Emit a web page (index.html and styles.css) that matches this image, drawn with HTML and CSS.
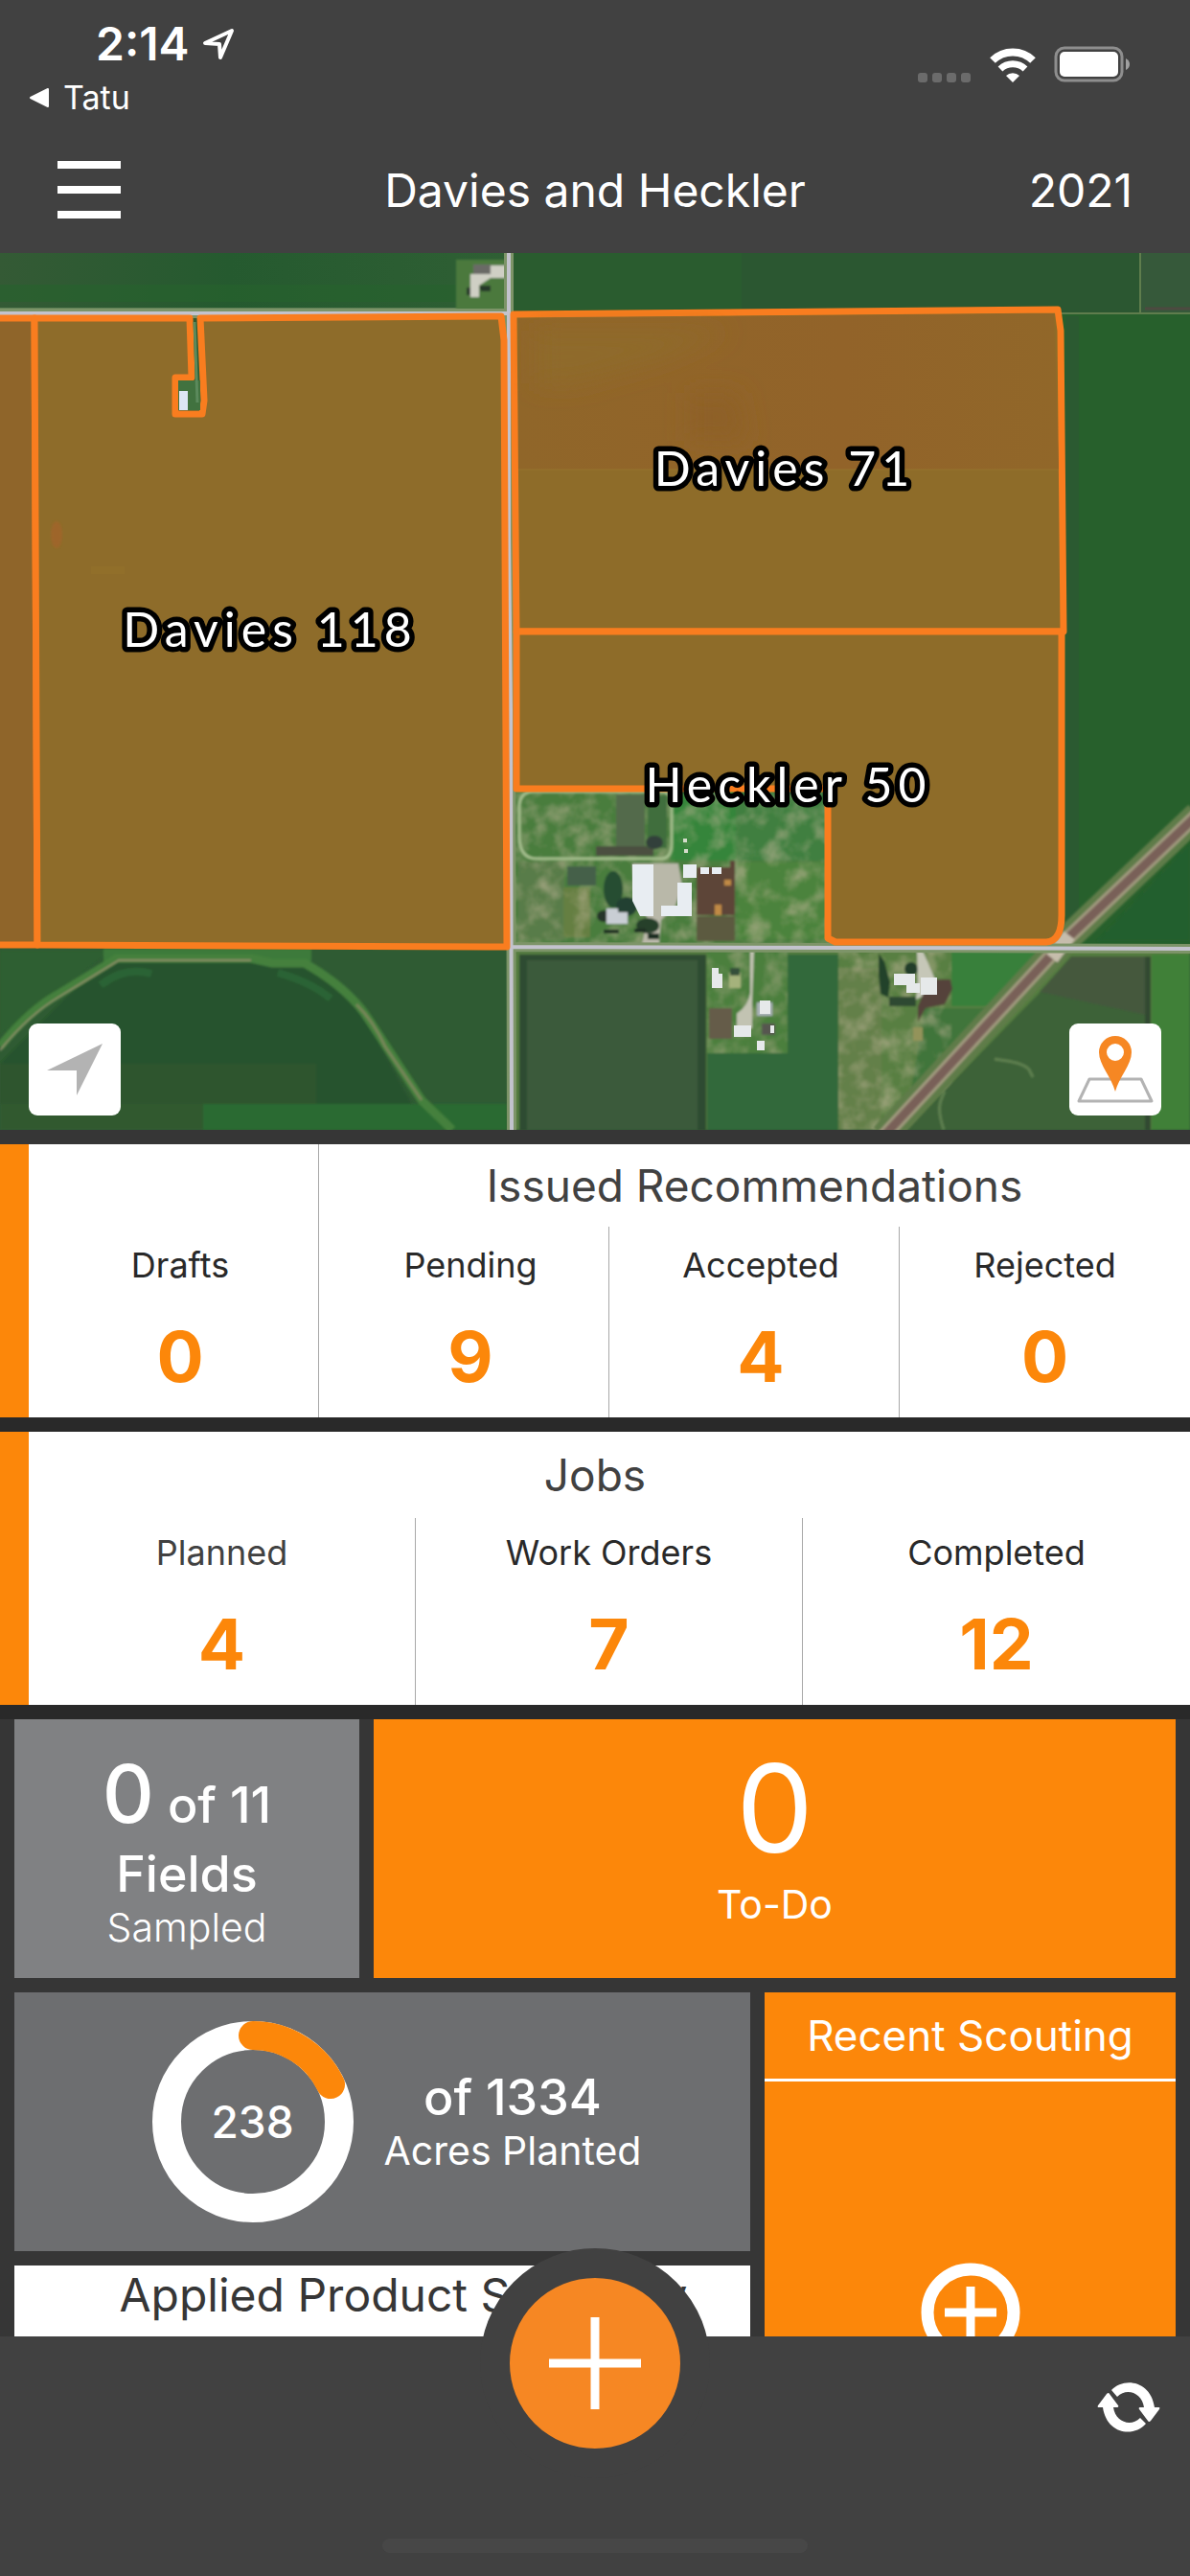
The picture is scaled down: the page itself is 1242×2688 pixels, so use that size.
FILE: index.html
```
<!DOCTYPE html>
<html lang="en">
<head>
    <meta charset="UTF-8">
    <meta name="viewport" content="width=device-width, initial-scale=1.0">
    <title>Davies and Heckler</title>
    <link rel="stylesheet" href="styles.css">
</head>
<body>
<div class="app">
    <header class="header">
        <div class="status-bar">
            <div class="status-left">
                <div class="time">2:14
                    <svg class="location-icon" viewBox="0 0 34 34" width="34" height="34">
                        <path d="M3 16 L31 3 L19 31 L18 17 Z" fill="none" stroke="#fff" stroke-width="4" stroke-linejoin="round"/>
                    </svg>
                </div>
                <a href="#" class="back-link">
                    <svg viewBox="0 0 22 22" width="22" height="22">
                        <path d="M2 11 L20 2 V20 Z" fill="#fff" stroke="#fff" stroke-width="2" stroke-linejoin="round"/>
                    </svg>
                    Tatu
                </a>
            </div>
            <div class="status-right">
                <svg viewBox="0 0 56 10" width="56" height="10" fill="#6b6b6b">
                    <rect x="0" width="10" height="10" rx="3"/>
                    <rect x="15" width="10" height="10" rx="3"/>
                    <rect x="30" width="10" height="10" rx="3"/>
                    <rect x="45" width="10" height="10" rx="3"/>
                </svg>
                <svg viewBox="0 0 48 36" width="48" height="36">
                    <path d="M3 13 A30 30 0 0 1 45 13" fill="none" stroke="#fff" stroke-width="8"/>
                    <path d="M11 22 A19 19 0 0 1 37 22" fill="none" stroke="#fff" stroke-width="7"/>
                    <path d="M24 36 L17 29 A10 10 0 0 1 31 29 Z" fill="#fff"/>
                </svg>
                <svg viewBox="0 0 80 38" width="80" height="38">
                    <rect x="2" y="2" width="69" height="34" rx="9" fill="none" stroke="#8e8e8e" stroke-width="3"/>
                    <rect x="6" y="6" width="61" height="26" rx="5" fill="#fff"/>
                    <path d="M75 13 Q79 15 79 19 Q79 23 75 25 Z" fill="#a0a0a0"/>
                </svg>
            </div>
        </div>
        <nav class="nav-bar">
            <button class="menu-button" aria-label="Menu">
                <span></span>
                <span></span>
                <span></span>
            </button>
            <h1>Davies and Heckler</h1>
            <button class="year-button">2021</button>
        </nav>
    </header>

    <main class="content">
        <section class="map">
            <svg class="map-image" viewBox="0 264 1242 915">
                <defs>
                    <filter id="soft" x="-5%" y="-5%" width="110%" height="110%">
                        <feGaussianBlur stdDeviation="1"/>
                    </filter>
                    <filter id="softer" x="-20%" y="-20%" width="140%" height="140%">
                        <feGaussianBlur stdDeviation="12"/>
                    </filter>
                    <!-- mottled grass over the farmyards -->
                    <filter id="grass" x="0" y="0" width="100%" height="100%">
                        <feTurbulence type="fractalNoise" baseFrequency="0.05" numOctaves="4" seed="4"/>
                        <feColorMatrix values="0 0 0 0 0.5  0 0 0 0 0.45  0 0 0 0 0.3  2.4 0 0 0 -1"/>
                    </filter>
                    <linearGradient id="topField" x1="0" x2="1" y1="0" y2="0">
                        <stop offset="0" stop-color="#345a35"/>
                        <stop offset="0.45" stop-color="#255a2f"/>
                        <stop offset="1" stop-color="#2f5f34"/>
                    </linearGradient>
                    <linearGradient id="davies71" x1="0" x2="1" y1="0" y2="0">
                        <stop offset="0" stop-color="#906629"/>
                        <stop offset="0.6" stop-color="#926329"/>
                        <stop offset="1" stop-color="#916729"/>
                    </linearGradient>
                </defs>

                <!-- ground -->
                <rect x="0" y="264" width="1242" height="915" fill="#2f5b33"/>
                <rect x="0" y="264" width="531" height="61" fill="url(#topField)"/>
                <rect x="0" y="297" width="476" height="18" fill="#27632d" opacity="0.6"/>
                <rect x="534" y="264" width="656" height="64" fill="#2b5731"/>
                <rect x="534" y="264" width="240" height="64" fill="#2a5c2f"/>
                <rect x="1191" y="264" width="51" height="62" fill="#36593a"/>
                <rect x="1108" y="327" width="134" height="661" fill="#27602c"/>
                <rect x="1112" y="330" width="14" height="650" fill="#2b5a31"/>
                <path d="M1190 264 V327 M1108 327 H1242" stroke="#5f7d4d" stroke-width="2"/>
                <path d="M1195 322 H1242" stroke="#4d4a40" stroke-width="3"/>
                <path d="M0 323 H531" stroke="#5f7f56" stroke-width="4"/>

                <!-- ditch south of Davies 118 -->
                <g filter="url(#soft)">
                    <path d="M110 1000 H318 L380 1060 L430 1152 H0 V1110 Z" fill="#27522f"/>
                    <rect x="0" y="1110" width="330" height="69" fill="#33592f" opacity="0.6"/>
                    <rect x="212" y="1152" width="317" height="27" fill="#2b6a31"/>
                    <path d="M0 992 H108 V998 L60 1035 L0 1080 Z" fill="#2d5f33"/>
                    <path d="M108 990 H325 V1003 H280 L262 998 H128 L108 1004 Z" fill="#3d7a3a"/>
                    <path d="M0 1092 Q30 1055 60 1038 L122 1000 H262 L284 1005 H318 Q365 1032 385 1064 L440 1148 L472 1179" fill="none" stroke="#44803c" stroke-width="9"/>
                    <path d="M0 1096 Q30 1059 62 1040 L124 1002 H262" fill="none" stroke="#8a8d68" stroke-width="2"/>
                    <path d="M372 1048 Q390 1066 402 1092 L440 1148" fill="none" stroke="#78865a" stroke-width="3"/>
                    <path d="M105 1028 Q130 1008 158 1016 M290 1015 Q325 1025 345 1042" fill="none" stroke="#2c6434" stroke-width="8"/>
                </g>

                <!-- farmstead at the top crossing -->
                <g filter="url(#soft)">
                    <rect x="476" y="271" width="54" height="52" fill="#4c793d"/>
                    <path d="M494 276 H512 V287 H494 Z" fill="#6a6a66"/>
                    <path d="M512 277 H528 V290 H512 L500 298 V310 H491 V286 H512 Z" fill="#cfcfc4"/>
                    <path d="M487 300 h4 v8 h-4z M500 298 h12 v6 h-10z" fill="#26382a"/>
                </g>

                <!-- Heckler farmyard -->
                <g filter="url(#soft)">
                    <rect x="536" y="823" width="330" height="165" fill="#4a7d3e"/>
                    <rect x="700" y="823" width="70" height="75" fill="#35853a"/>
                    <rect x="768" y="823" width="98" height="75" fill="#3f7f3f"/>
                    <rect x="770" y="900" width="94" height="80" fill="#4b833c"/>
                    <rect x="541" y="899" width="48" height="82" fill="#587c48"/>
                    <rect x="588" y="926" width="28" height="52" fill="#657f42"/>
                    <rect x="536" y="823" width="330" height="165" filter="url(#grass)" opacity="0.6"/>
                    <rect x="592" y="904" width="30" height="20" fill="#45604a"/>
                    <rect x="643" y="829" width="30" height="60" fill="#536b4b"/>
                    <rect x="622" y="883" width="60" height="10" fill="#4c4f3f"/>
                    <rect x="676" y="830" width="20" height="55" fill="#3f6e3d"/>
                    <ellipse cx="683" cy="879" rx="9" ry="7" fill="#33413a"/>
                    <path d="M557 826 H690 Q701 826 701 838 V880 Q701 896 690 896 H560 Q542 896 542 872 V842 Q542 826 557 826 Z" fill="none" stroke="#a3bd8c" stroke-width="3"/>
                    <path d="M660 901 H708 L712 924 L705 945 L690 960 L688 985 H670 L676 958 L662 940 Z" fill="#b9b8a9"/>
                    <path d="M727 905 H762 V898 H767 V955 H727 Z" fill="#5d4438"/>
                    <rect x="727" y="956" width="40" height="26" fill="#5b5a40"/>
                    <rect x="746" y="944" width="7" height="11" fill="#c08a45"/>
                    <rect x="756" y="918" width="7" height="6" fill="#c08a45"/>
                    <ellipse cx="640" cy="928" rx="10" ry="19" fill="#274d33"/>
                    <ellipse cx="654" cy="946" rx="11" ry="10" fill="#234030"/>
                    <ellipse cx="630" cy="956" rx="7" ry="6" fill="#25352a"/>
                    <ellipse cx="676" cy="966" rx="12" ry="8" fill="#253f2b"/>
                    <path d="M630 970 h16 v4 h-16z M662 969 h12 v4 h-12z M676 974 h12 v6 h-12z" fill="#1f2f22"/>
                    <path d="M633 948 H645 V952 H655 V964 H633 Z" fill="#c9ced4"/>
                </g>
                <path d="M660 902 H682 V956 H668 L660 940 Z M713 902 H727 V916 H713 Z M731 905 H740 V912 H731 Z M743 905 H753 V912 H743 Z M707 921 H722 V956 H690 V945 H707 Z" fill="#e8edf2"/>
                <path d="M713 875 h4 v4 h-4z M714 886 h4 v4 h-4z" fill="#d5dccb"/>

                <!-- fields and yards south of the road -->
                <g filter="url(#soft)">
                    <rect x="536" y="992" width="706" height="187" fill="#557d40"/>
                    <rect x="542" y="996" width="195" height="183" fill="#2d4c31"/>
                    <rect x="550" y="1002" width="178" height="177" fill="#3b5a3a"/>
                    <rect x="738" y="992" width="85" height="107" fill="#4c7f3e"/>
                    <path d="M738 1099 H822 V996 H875 V1179 H738 Z" fill="#33693a"/>
                    <path d="M875 992 H1093 L922 1179 H875 Z" fill="#587f42"/>
                    <path d="M875 1010 H920 V1179 H875 Z" fill="#64804a"/>
                    <path d="M993 992 H1090 L1035 1050 H993 Z" fill="#38803a"/>
                    <path d="M965 1052 H1032 L950 1145 Z" fill="#40743a"/>
                    <rect x="738" y="992" width="84" height="107" filter="url(#grass)" opacity="0.5"/>
                    <rect x="875" y="992" width="118" height="187" filter="url(#grass)" opacity="0.6"/>
                    <path d="M1122 998 H1200 V1179 H945 Z" fill="#3d6239"/>
                    <path d="M1118 998 H1200 V1060 L1085 1035 Z" fill="#45593c"/>
                    <path d="M1195 998 H1201 V1179 H1195 Z" fill="#304a30"/>
                    <rect x="1202" y="996" width="40" height="183" fill="#3f8038"/>
                    <path d="M985 1179 C978 1158 980 1150 986 1139 M1038 1105 C1050 1107 1066 1108 1074 1116 L1078 1124" fill="none" stroke="#5f8050" stroke-width="3"/>
                    <path d="M1145 982 L1242 880 V982 Z" fill="#245f2e"/>

                    <path d="M784 992 V1036 Q782 1050 770 1058 V1072 H784 V1048 L786 992 Z" fill="#c2c3b2" stroke="#c2c3b2" stroke-width="2"/>
                    <rect x="740" y="1052" width="24" height="32" fill="#655b48"/>
                    <rect x="761" y="1015" width="12" height="16" fill="#a5b27c"/>
                    <rect x="762" y="1010" width="10" height="8" fill="#34503a"/>
                    <rect x="795" y="1068" width="14" height="12" fill="#56574f"/>
                    <path d="M790 1046 h16 v14 h-16z" fill="#aab2b8"/>
                    <path d="M917 995 l6 8 6 22 -2 16 -8 -4 -2 -20z" fill="#24422b"/>
                    <ellipse cx="951" cy="1011" rx="7" ry="7" fill="#223e2b"/>
                    <path d="M957 992 H963 L976 1022 L962 1040 L956 1043 L958 1022 Z" fill="#c6c7b8"/>
                    <path d="M976 1022 h16 l2 10 -8 16 -20 4 -8 14 v-16 l6 -14 z" fill="#55433a"/>
                    <rect x="928" y="1040" width="28" height="10" fill="#2f4a32"/>
                    <path d="M953 1072 h10 v14 h-10z" fill="#93935a"/>
                </g>
                <path d="M743 1010 h7 v6 h4 v15 h-11z M766 1070 h18 v12 h-18z M790 1086 h8 v10 h-8z M793 1044 h11 v14 h-11z M804 1070 h4 v8 h-4z M933 1016 h22 v10 h5 v10 h-14 v-8 h-13z M961 1020 h17 v18 h-17z" fill="#e6e9ea"/>

                <!-- railroad -->
                <g fill="none" filter="url(#soft)">
                    <path d="M1250 850 L1108 985 L922 1186" stroke="#5e7c48" stroke-width="28"/>
                    <path d="M1250 850 L1108 985 L922 1186" stroke="#a09a7e" stroke-width="15"/>
                    <path d="M1250 850 L1108 985 L922 1186" stroke="#796059" stroke-width="9"/>
                    <path d="M1098 1000 L1116 976" stroke="#c6bdac" stroke-width="14"/>
                </g>

                <!-- roads -->
                <path d="M0 327 H531 M531 264 L531 560 L533 740 L534 1179 M533 988 L1242 990" fill="none" stroke="#7d9468" stroke-width="10"/>
                <path d="M0 327 H531 M531 264 L531 560 L533 740 L534 1179 M533 988 L1242 990" fill="none" stroke="#c3c3cd" stroke-width="4"/>

                <!-- field boundaries -->
                <g stroke="#f97d1f" stroke-width="7" stroke-linejoin="round">
                    <path d="M-10 332 H36 L39 986 H-10 Z" fill="#8f652a"/>
                    <path d="M36 332 H198 L200 394 H183 V432 H211 L213 418 L209 332 L523 330 L526 355 L529 988 L39 986 Z" fill="#8e6c2a"/>
                    <path d="M536 328 L1104 323 L1107 345 L1110 659 H539 Z" fill="#8e6c29"/>
                    <path d="M539 659 H1108 L1108 955 Q1108 982 1092 983 L872 983 L864 979 V823 H539 Z" fill="#8e6c29"/>
                </g>
                <path d="M541 332 L1100 327 L1105 490 H541 Z" fill="url(#davies71)"/>
                <path d="M541 490 H1105" stroke="#96752e" stroke-width="1"/>
                <g filter="url(#softer)">
                    <path d="M560 345 H760 L690 375 L600 400 H560 Z" fill="#8f6b29"/>
                    <path d="M720 410 h50 l10 50 h-60z" fill="#8e6127"/>
                </g>
                <ellipse cx="59" cy="558" rx="6" ry="14" fill="#a5642b" filter="url(#soft)" opacity="0.7"/>
                <path d="M95 595 H130" stroke="#98782b" stroke-width="8" opacity="0.3"/>
                <rect x="186" y="397" width="23" height="31" fill="#41723f"/>
                <path d="M203 336 L206 420" stroke="#5b8a5c" stroke-width="3"/>
                <rect x="187" y="408" width="9" height="20" fill="#dde6f5"/>

                <g class="field-labels">
                    <text x="282" y="675">Davies 118</text>
                    <text x="819" y="507">Davies 71</text>
                    <text x="823" y="837">Heckler 50</text>
                </g>
            </svg>

            <button class="map-button locate" aria-label="My location">
                <svg viewBox="0 0 96 96" width="96" height="96">
                    <path d="M19 49 L77 21 L50 75 V49 Z" fill="#b3b3b3"/>
                </svg>
            </button>
            <button class="map-button layers" aria-label="Map layers">
                <svg viewBox="0 0 96 96" width="96" height="96">
                    <path d="M21 58 H75 L86 81 H10 Z" fill="none" stroke="#b3b3b3" stroke-width="3" stroke-linejoin="round"/>
                    <path fill-rule="evenodd" fill="#f68723" d="M48 71 C44 56 31 43 31 30 A17 17 0 0 1 65 30 C65 43 52 56 48 71 Z M48 21 A9 9 0 1 0 48 39 A9 9 0 1 0 48 21 Z"/>
                </svg>
            </button>
        </section>

        <section class="panel recommendations">
            <div class="stat">
                <span class="label">Drafts</span>
                <span class="number">0</span>
            </div>
            <div class="issued">
                <h2>Issued Recommendations</h2>
                <div class="stats">
                    <div class="stat">
                        <span class="label">Pending</span>
                        <span class="number">9</span>
                    </div>
                    <div class="stat">
                        <span class="label">Accepted</span>
                        <span class="number">4</span>
                    </div>
                    <div class="stat">
                        <span class="label">Rejected</span>
                        <span class="number">0</span>
                    </div>
                </div>
            </div>
        </section>

        <section class="panel jobs">
            <h2>Jobs</h2>
            <div class="stats">
                <div class="stat">
                    <span class="label light">Planned</span>
                    <span class="number">4</span>
                </div>
                <div class="stat">
                    <span class="label">Work Orders</span>
                    <span class="number">7</span>
                </div>
                <div class="stat">
                    <span class="label">Completed</span>
                    <span class="number">12</span>
                </div>
            </div>
        </section>

        <section class="tiles">
            <div class="tile-row top-row">
                <div class="tile sampled">
                    <p class="count"><span class="big">0</span> of 11</p>
                    <p class="total">Fields</p>
                    <p class="caption thin">Sampled</p>
                </div>
                <div class="tile todo">
                    <p class="huge">0</p>
                    <p class="caption">To-Do</p>
                </div>
            </div>
            <div class="tile-row bottom-row">
                <div class="tile-column">
                    <div class="tile planted">
                        <div class="ring">
                            <svg viewBox="0 0 210 210" width="210" height="210">
                                <circle cx="105" cy="105" r="90" fill="none" stroke="#fff" stroke-width="30"/>
                                <path d="M105 15 A90 90 0 0 1 186 66" fill="none" stroke="#fc870a" stroke-width="30" stroke-linecap="round"/>
                            </svg>
                            <span class="ring-value">238</span>
                        </div>
                        <div class="planted-text">
                            <p class="total">of 1334</p>
                            <p class="caption">Acres Planted</p>
                        </div>
                    </div>
                    <div class="tile applied">
                        <h2>Applied Product Summary</h2>
                    </div>
                </div>
                <div class="tile scouting">
                    <h3>Recent Scouting</h3>
                    <button class="add-scouting" aria-label="Add scouting">
                        <svg viewBox="0 0 104 104" width="104" height="104">
                            <circle cx="52" cy="52" r="45" fill="none" stroke="#fff" stroke-width="13"/>
                            <path d="M25 52 H79 M52 25 V79" stroke="#fff" stroke-width="9"/>
                        </svg>
                    </button>
                </div>
            </div>
        </section>
    </main>

    <footer class="footer">
        <button class="add-button" aria-label="Add">
            <svg viewBox="0 0 96 96" width="96" height="96">
                <path d="M0 48 H96 M48 0 V96" stroke="#fff" stroke-width="9"/>
            </svg>
        </button>
        <button class="sync-button" aria-label="Sync">
            <svg viewBox="0 0 66 56" width="66" height="56" fill="#fff">
                <path d="M15 10 C28 -4 56 0 60 28 H64.500 Q66 28 65 30 L56 42 Q54 44 53 42 L44 30 Q43 28 45 28 H49 C47 13 31 7 21 17 Z"/>
                <path d="M51 45 C38 60 10 56 6 28 H1.500 Q0 28 1 26 L10 14 Q12 12 13 14 L22 26 Q23 28 21 28 H17 C19 43 35 49 45 39 Z"/>
            </svg>
        </button>
        <div class="home-indicator"></div>
    </footer>
</div>
</body>
</html>
```
FILE: styles.css
```
* {
    box-sizing: border-box;
}

body {
    margin: 0;
    font-family: Inter, 'Liberation Sans', sans-serif;
    background-color: #363636;
    color: #fff;
}

h1, h2, h3, p {
    margin: 0;
    font-weight: 400;
}

button {
    padding: 0;
    border: none;
    background: none;
    color: inherit;
    font-family: inherit;
    cursor: pointer;
}

svg {
    display: block;
}

.app {
    display: flex;
    flex-direction: column;
    height: 100vh;
    overflow: hidden;
}

/* header */
.header {
    flex: none;
    background-color: #414141;
}

.status-bar {
    display: flex;
    justify-content: space-between;
    padding: 16px 62px 0 30px;
    height: 132px;
}

.time {
    display: flex;
    align-items: center;
    gap: 14px;
    padding-left: 70px;
    font-size: 48px;
    font-weight: 600;
    line-height: 60px;
}

.back-link {
    display: flex;
    align-items: center;
    gap: 14px;
    margin-top: 6px;
    color: #fff;
    font-size: 34px;
    line-height: 40px;
    text-decoration: none;
}

.status-right {
    display: flex;
    align-items: flex-end;
    gap: 19px;
    height: 70px;
}

.nav-bar {
    display: grid;
    grid-template-columns: 1fr auto 1fr;
    align-items: center;
    height: 132px;
    padding: 0 60px;
}

.nav-bar h1 {
    font-size: 48px;
}

.menu-button {
    display: flex;
    flex-direction: column;
    gap: 18px;
    width: 66px;
}

.menu-button span {
    height: 8px;
    background-color: #fff;
}

.year-button {
    justify-self: end;
    font-size: 48px;
}

.content {
    flex: 1;
    min-height: 0;
    overflow: hidden;
}

/* map */
.map {
    position: relative;
}

.map-image {
    width: 100%;
}

.field-labels text {
    fill: #fff;
    stroke: #000;
    stroke-width: 11px;
    stroke-linejoin: round;
    paint-order: stroke;
    font-family: Lato, sans-serif;
    font-size: 50px;
    letter-spacing: 6px;
    text-anchor: middle;
}

.map-button {
    position: absolute;
    bottom: 15px;
    width: 96px;
    height: 96px;
    border-radius: 9px;
    background-color: #fff;
}

.locate {
    left: 30px;
}

.layers {
    right: 30px;
}

/* white panels */
.panel {
    height: 285px;
    border-left: 30px solid #fc870a;
    background-color: #fff;
    color: #414141;
}

.panel h2 {
    font-size: 46px;
    line-height: 86px;
    text-align: center;
}

.recommendations {
    display: grid;
    grid-template-columns: 1fr 3fr;
    margin-top: 15px;
    box-shadow: 0 15px #292929;
}

.issued {
    display: flex;
    flex-direction: column;
}

.jobs {
    display: flex;
    flex-direction: column;
    margin-top: 15px;
    box-shadow: 0 15px #292929;
}

.jobs h2 {
    padding: 2px 30px 2px 0;
}

.stats {
    display: grid;
    grid-template-columns: repeat(3, 1fr);
    flex: 1;
}

.stat {
    display: flex;
    flex-direction: column;
    align-items: center;
    justify-content: flex-end;
    padding-bottom: 19px;
    border-right: 1px solid #a8a8a8;
}

.recommendations .stat {
    padding-left: 14px;
}

.stats .stat:last-child {
    padding-left: 0;
    border-right: none;
}

.label {
    color: #292929;
    font-size: 36px;
    line-height: 44px;
}

.label.light {
    color: #414141;
}

.number {
    margin-top: 30px;
    color: #fc870a;
    font-size: 73px;
    font-weight: 700;
    line-height: 88px;
}

/* tiles */
.tiles {
    display: flex;
    flex-direction: column;
    gap: 15px;
    margin-top: 15px;
    padding: 0 15px;
}

.tile-row {
    display: grid;
    gap: 15px;
}

.top-row {
    grid-template-columns: 360fr 837fr;
}

.bottom-row {
    grid-template-columns: 768fr 429fr;
}

.tile-column {
    display: flex;
    flex-direction: column;
    gap: 15px;
}

.tile {
    text-align: center;
}

.sampled {
    height: 270px;
    padding-top: 36px;
    background-color: #808183;
}

.count {
    font-size: 52px;
    font-weight: 500;
    line-height: 84px;
}

.big {
    font-size: 84px;
}

.total {
    font-size: 52px;
    font-weight: 500;
    line-height: 60px;
}

.caption {
    font-size: 41px;
    line-height: 50px;
}

.thin {
    font-weight: 300;
}

.todo {
    padding-top: 18px;
    background-color: #fc870a;
}

.huge {
    font-size: 128px;
    line-height: 150px;
}

.planted {
    display: flex;
    align-items: center;
    justify-content: center;
    gap: 32px;
    height: 270px;
    padding-left: 30px;
    background-color: #6d6e70;
}

.ring {
    display: grid;
    place-items: center;
}

.ring > * {
    grid-area: 1 / 1;
}

.ring-value {
    font-size: 46px;
    font-weight: 500;
}

.applied {
    padding-left: 44px;
    height: 270px;
    background-color: #fff;
    color: #363636;
}

.applied h2 {
    font-size: 48px;
    line-height: 62px;
}

.scouting {
    display: flex;
    flex-direction: column;
    align-items: center;
    background-color: #fc870a;
}

.scouting h3 {
    width: 100%;
    border-bottom: 3px solid #fff;
    font-size: 44px;
    line-height: 90px;
}

.add-scouting {
    margin-top: 189px;
}

/* footer */
.footer {
    position: relative;
    flex: none;
    height: 250px;
    background-color: #414141;
}

.add-button {
    position: absolute;
    top: -92px;
    left: 50%;
    display: grid;
    place-items: center;
    width: 240px;
    height: 240px;
    border: 31px solid #414141;
    border-radius: 50%;
    background-color: #f68723;
    transform: translateX(-50%);
}

.sync-button {
    position: absolute;
    top: 46px;
    right: 31px;
}

.home-indicator {
    position: absolute;
    bottom: 24px;
    left: 50%;
    width: 444px;
    height: 15px;
    border-radius: 8px;
    background-color: #474747;
    transform: translateX(-50%);
}
```
